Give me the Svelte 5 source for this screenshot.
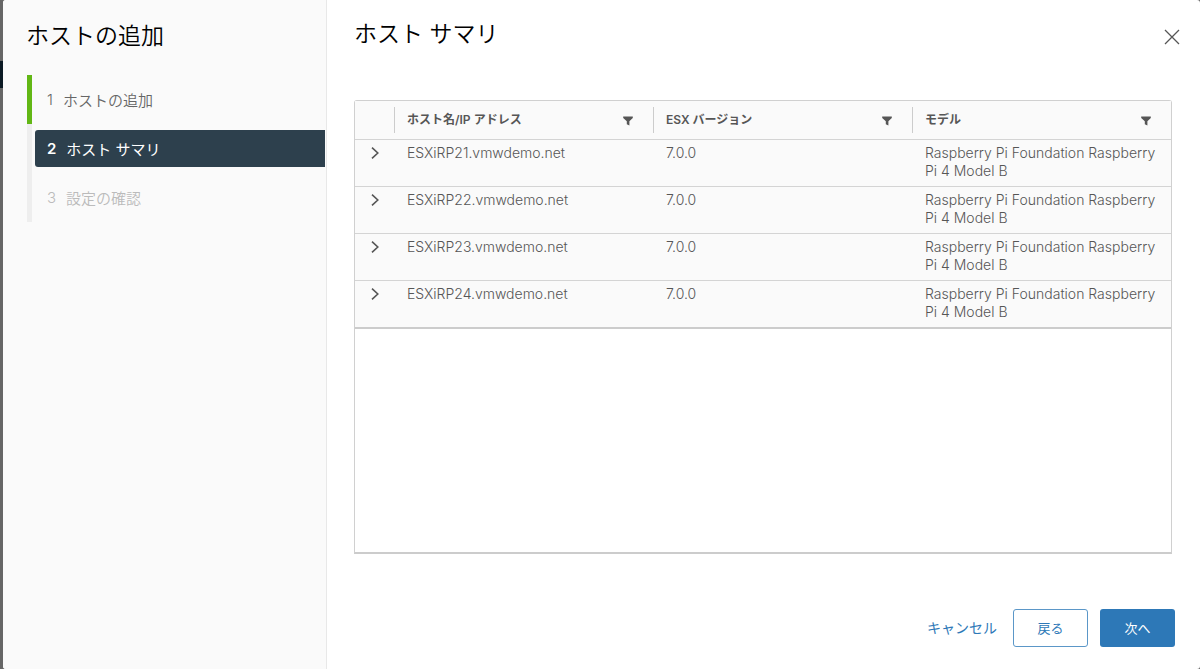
<script lang="ts">
  type Step = { label: string; state: "done" | "active" | "pending" };

  const steps: Step[] = [
    { label: "ホストの追加", state: "done" },
    { label: "ホスト サマリ", state: "active" },
    { label: "設定の確認", state: "pending" },
  ];

  const columns = ["ホスト名/IP アドレス", "ESX バージョン", "モデル"];

  const hosts = ["21", "22", "23", "24"].map((id) => ({
    name: `ESXiRP${id}.vmwdemo.net`,
    version: "7.0.0",
    model: "Raspberry Pi Foundation Raspberry Pi 4 Model B",
  }));
</script>

<div class="backdrop">
  <div class="wizard" role="dialog" aria-labelledby="page-title">
    <aside>
      <h1>ホストの追加</h1>
      <ol>
        {#each steps as step, i}
          <li class={step.state}>
            <button class="step" disabled={step.state === "pending"}>
              <span>{i + 1}</span>{step.label}
            </button>
          </li>
        {/each}
      </ol>
    </aside>

    <main>
      <header>
        <h2 id="page-title">ホスト サマリ</h2>
        <button class="close" aria-label="閉じる">
          <svg width="16" height="16" viewBox="0 0 16 16">
            <path d="M1 1L15 15M15 1L1 15" />
          </svg>
        </button>
      </header>

      <div class="datagrid">
        <table>
          <thead>
            <tr>
              <th class="toggle"></th>
              {#each columns as column}
                <th>
                  <div class="column">
                    {column}
                    <button class="filter" aria-label="フィルタ">
                      <svg width="10" height="10" viewBox="0 0 10 10">
                        <path d="M0.2 0.6H9.8V2L6.4 5.2V9.4L3.8 8.2V5.2L0.2 2Z" />
                      </svg>
                    </button>
                  </div>
                </th>
              {/each}
            </tr>
          </thead>
          <tbody>
            {#each hosts as host}
              <tr>
                <td class="toggle">
                  <button aria-label="展開">
                    <svg width="8" height="12" viewBox="0 0 8 12">
                      <path d="M1 0.6L6.8 6L1 11.4" />
                    </svg>
                  </button>
                </td>
                <td>{host.name}</td>
                <td>{host.version}</td>
                <td>{host.model}</td>
              </tr>
            {/each}
          </tbody>
        </table>
      </div>

      <footer>
        <button class="btn link">キャンセル</button>
        <button class="btn outline">戻る</button>
        <button class="btn primary">次へ</button>
      </footer>
    </main>
  </div>
</div>

<style>
  :global(body) {
    margin: 0;
    background: #5f5f5f;
  }

  button {
    border: 0;
    padding: 0;
    background: none;
    color: inherit;
    font: inherit;
    cursor: pointer;
  }

  svg {
    display: block;
  }

  .backdrop {
    padding-left: 3px;
    background: linear-gradient(#666 61px, #0b1a24 61px, #0b1a24 88px, #666 88px);
    font-family: Inter, "Noto Sans CJK JP", sans-serif;
    color: #565656;
  }

  .wizard {
    display: flex;
    min-height: 100vh;
    border-radius: 3px;
    background: #fff;
    overflow: hidden;
  }

  aside {
    box-sizing: border-box;
    flex: 0 0 324px;
    padding: 20px 1px 0 23px;
    border-right: 1px solid #e8e8e8;
    background: #fafafa;
  }

  h1,
  h2 {
    margin: 0;
    font-size: 23px;
    line-height: 32px;
    font-weight: 350;
    color: #000;
  }

  ol {
    list-style: none;
    margin: 23px 0 0 1px;
    padding: 0;
  }

  li {
    padding: 6px 0 6px 3px;
    border-left: 5px solid #eee;
  }

  li.done {
    border-color: #62b715;
  }

  .step {
    display: flex;
    align-items: center;
    gap: 10px;
    width: 100%;
    height: 37px;
    padding-left: 12px;
    border-radius: 3px 0 0 3px;
    font-size: 15px;
    font-weight: 350;
    color: #666;
  }

  .active .step {
    background: #2d404d;
    color: #fff;
    font-weight: 400;
  }

  .active span {
    font-weight: 600;
  }

  .pending .step {
    color: #bbb;
  }

  main {
    display: flex;
    flex-direction: column;
    flex: 1;
    min-width: 0;
    padding: 18px 25px 22px 27px;
  }

  header {
    display: flex;
    justify-content: space-between;
    margin-bottom: 50px;
  }

  .close {
    align-self: center;
    margin: 6px -9px 0 0;
    padding: 4px;
  }

  .close path {
    fill: none;
    stroke: #565656;
    stroke-width: 1.3;
  }

  .datagrid {
    flex: 1;
    margin-right: 3px;
    border: 1px solid #d0d0d0;
    border-bottom: 2px solid #ccc;
    border-radius: 3px 3px 0 0;
  }

  table {
    width: 100%;
    table-layout: fixed;
    border-collapse: separate;
    border-spacing: 0;
    background: #fafafa;
  }

  th {
    height: 38px;
    padding: 0;
    border-bottom: 1px solid #d4d4d4;
    font-size: 12px;
    line-height: 18px;
    font-weight: 600;
    text-align: left;
  }

  .column {
    display: flex;
    align-items: center;
    justify-content: space-between;
    height: 26px;
    padding: 0 20px 0 12px;
    border-left: 1px solid #ccc;
  }

  .filter {
    padding-top: 2px;
  }

  .filter path {
    fill: #565656;
  }

  td {
    padding: 4px 12px 6px 13px;
    border-bottom: 1px solid #d4d4d4;
    font-size: 14px;
    line-height: 18px;
    font-weight: 300;
    color: #565656;
    vertical-align: top;
  }

  tbody tr:last-child td {
    border-bottom: 2px solid #ccc;
  }

  .toggle {
    width: 39px;
    padding: 0;
  }

  .toggle button {
    padding: 7px 16px;
  }

  .toggle path {
    fill: none;
    stroke: #565656;
    stroke-width: 1.6;
  }

  footer {
    display: flex;
    justify-content: flex-end;
    gap: 12px;
    margin-top: 55px;
  }

  .btn {
    box-sizing: border-box;
    min-width: 75px;
    height: 38px;
    padding-bottom: 2px;
    border: 1px solid transparent;
    border-radius: 3px;
    font-size: 13px;
    color: #2d78b7;
  }

  .link {
    padding-right: 3px;
    font-size: 14px;
  }

  .outline {
    border-color: #5b97c8;
  }

  .primary {
    background: #2d78b7;
    color: #fff;
  }
</style>
